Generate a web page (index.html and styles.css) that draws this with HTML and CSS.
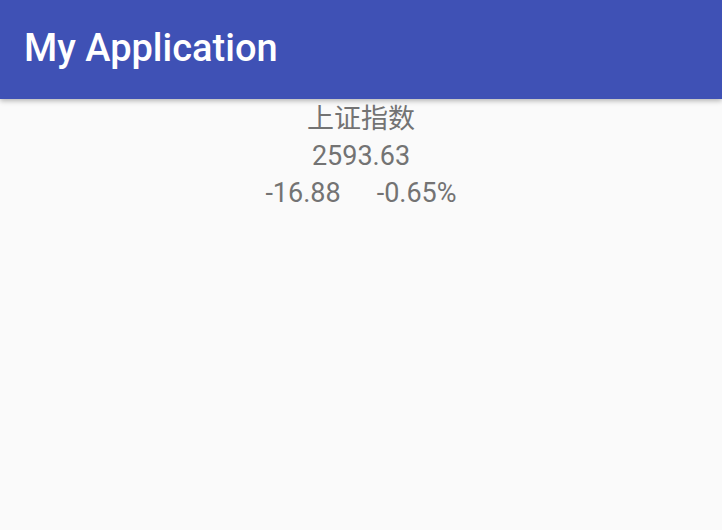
FILE: index.html
```html
<!DOCTYPE html>
<html>
<head>
<meta charset="utf-8">
<link rel="stylesheet" href="styles.css">
</head>
<body>
<header class="toolbar"><h1 class="title">My Application</h1></header>
<main class="content">
  <div class="line name">上证指数</div>
  <div class="line">2593.63</div>
  <div class="line change"><span>-16.88</span><span>-0.65%</span></div>
</main>
</body>
</html>
```
FILE: styles.css
```css
html, body { margin: 0; padding: 0; }
body {
  width: 722px; height: 530px; overflow: hidden;
  background: #fafafa;
  font-family: Roboto, "Noto Sans CJK SC", sans-serif;
}
.toolbar {
  height: 99px;
  background: #3f51b5;
  display: flex; align-items: center;
  padding-left: 24px;
  box-shadow: 0 2px 5px rgba(0,0,0,0.28);
  position: relative; z-index: 1;
}
.title {
  margin: 0; color: #fff;
  font-size: 38px; font-weight: 500;
  padding-bottom: 3px;
}
.content {
  display: flex; flex-direction: column; align-items: center;
  padding-top: 2px;
  color: #737373;
  font-size: 27px;
}
.line { line-height: 37px; }
.change { display: flex; gap: 36px; }
```
